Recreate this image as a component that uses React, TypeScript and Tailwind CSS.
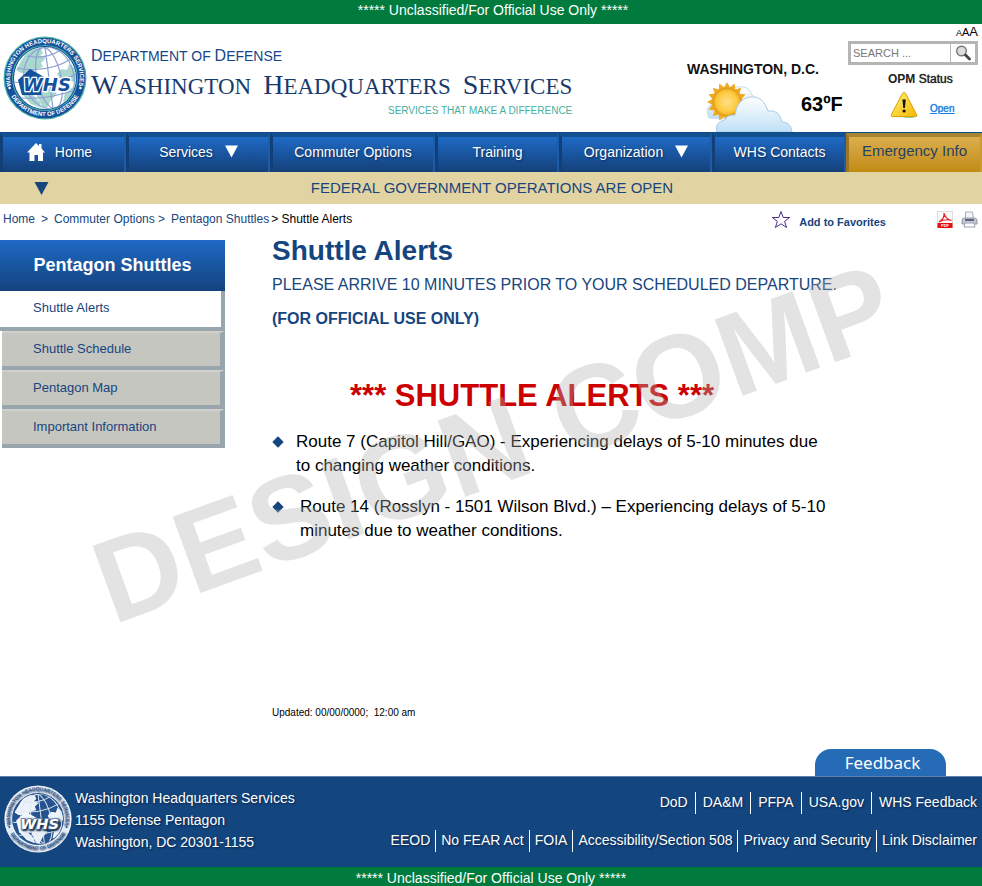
import React from 'react';

function Seal({ id, size, mono }: { id: string; size: string; mono?: boolean }) {
  const ring = mono ? '#e4ebf5' : '#14509c';
  const edge = mono ? '#f4f7fb' : '#4fb3a8';
  const lettering = mono ? '#2f5a93' : '#ffffff';
  const sea = mono ? '#24538d' : '#ffffff';
  const land = mono ? '#eef3fa' : '#a9d8ce';
  const grid = mono ? '#dfe8f4' : '#8d9fd4';
  return (
    <svg viewBox="0 0 84 84" className={size} role="img" aria-label="Washington Headquarters Services seal">
      <defs>
        <path id={id + '-top'} d="M 8.2 50 A 34.8 34.8 0 1 1 75.8 50" />
        <path id={id + '-bottom'} d="M 6 55 A 38.4 38.4 0 0 0 78 55" />
        <clipPath id={id + '-globe'}>
          <circle cx="42" cy="42" r="31" />
        </clipPath>
      </defs>
      <circle cx="42" cy="42" r="41.5" fill={edge} />
      <circle cx="42" cy="42" r="40.2" fill={ring} />
      <circle cx="42" cy="42" r="33" fill={edge} />
      <circle cx="42" cy="42" r="32" fill={mono ? '#24538d' : '#14509c'} />
      <circle cx="42" cy="42" r="31" fill={sea} />
      <g clipPath={`url(#${id}-globe)`}>
        <path d="M13 34 L20 22 L24 16 L31 12 L38 13 L40 17 L37 20 L43 22 L38 27 L40 31 L33 33 L28 37 L18 37 Z M39 50 L50 54 L54 58 L48 64 L44 72 L40 72 L34 60 Z M54 38 L58 33 L64 34 L66 28 L71 32 L74 42 L70 46 L62 43 L56 42 Z M62 56 L72 50 L68 64 L60 66 Z M18 57 L30 59 L37 66 L38 72 L28 68 Z" fill={land} />
        <g fill="none" stroke={grid} strokeWidth="1.2">
          <ellipse cx="46" cy="42" rx="12" ry="31" transform="rotate(-12 46 42)" />
          <ellipse cx="46" cy="42" rx="25" ry="31" transform="rotate(-12 46 42)" />
          <path d="M42 11 L50 73 M14 32 Q44 38 70 22 M11 46 Q46 52 74 38 M18 62 Q44 64 72 54 M24 20 Q42 24 58 14" />
        </g>
      </g>
      <path d="M15 44 L27 33 L41 41 L38 59 L19 59 Z" fill={mono ? '#f4f7fb' : '#14509c'} />
      <text x="20" y="54.5" fontFamily="DejaVu Sans, sans-serif" fontWeight="bold" fontStyle="italic" fontSize="18" stroke={mono ? '#6f8db8' : '#ffffff'} strokeWidth="2.6" paintOrder="stroke" fill={mono ? '#ffffff' : '#14509c'}>WHS</text>
      <g fontFamily="Liberation Sans, sans-serif" fontWeight="bold" fill={lettering}>
        <text fontSize="6">
          <textPath href={`#${id}-top`} startOffset="50%" textAnchor="middle">WASHINGTON HEADQUARTERS SERVICES</textPath>
        </text>
        <text fontSize="6">
          <textPath href={`#${id}-bottom`} startOffset="50%" textAnchor="middle">DEPARTMENT OF DEFENSE</textPath>
        </text>
      </g>
      <circle cx="6.6" cy="52" r="1.3" fill={lettering} />
      <circle cx="77.4" cy="52" r="1.3" fill={lettering} />
    </svg>
  );
}

function SunCloud() {
  const rays = Array.from({ length: 16 }, (_, i) => {
    const a = (i * Math.PI) / 8;
    const p = (r: number, d: number) => `${22 + r * Math.cos(a + d)},${20 + r * Math.sin(a + d)}`;
    return `${p(20, 0)} ${p(15, 0.2)}`;
  }).join(' ');
  return (
    <svg viewBox="0 0 88 50" className="mt-1 h-[50px] w-[88px]" aria-hidden="true">
      <defs>
        <linearGradient id="cloud" x1="0" y1="0" x2="0" y2="1">
          <stop offset="0" stopColor="#ffffff" />
          <stop offset="1" stopColor="#bfe0f6" />
        </linearGradient>
        <radialGradient id="sun">
          <stop offset="0" stopColor="#ffe08a" />
          <stop offset="0.75" stopColor="#fdc93c" />
          <stop offset="1" stopColor="#e9a31c" />
        </radialGradient>
      </defs>
      <path d="M4 36 Q-1 26 7 22 Q20 6 32 5 Q44 3 47 13 Q54 16 50 24 Q40 38 16 37 Z" fill="url(#cloud)" stroke="#c9dcea" strokeWidth="1" />
      <polygon points={rays} fill="#f0ab22" />
      <circle cx="22" cy="20" r="14" fill="url(#sun)" stroke="#dc9a1e" strokeWidth="1" />
      <path d="M12 50 Q9 40 20 38 Q21 33 30 33 Q32 17 45 15 Q58 13 63 29 Q74 27 77 40 Q86 40 87 50 Z" fill="url(#cloud)" stroke="#a9cde6" strokeWidth="1" />
    </svg>
  );
}

function WarningIcon() {
  return (
    <svg viewBox="0 0 28 27" className="h-[27px] w-[28px]" aria-hidden="true">
      <defs>
        <linearGradient id="warn" x1="0" y1="0" x2="1" y2="1">
          <stop offset="0" stopColor="#fff27a" />
          <stop offset="1" stopColor="#f5b800" />
        </linearGradient>
      </defs>
      <ellipse cx="19" cy="25" rx="7" ry="2" fill="#8ed27e" />
      <path d="M14 1.5 Q15 1.5 15.6 2.6 L26.8 24 Q27 25.4 26 25.5 L2 25.5 Q1 25.4 1.2 24 L12.4 2.6 Q13 1.5 14 1.5Z" fill="url(#warn)" stroke="#d9a300" />
      <path d="M12.4 8.5 H15.8 L14.9 17 H13.3 Z" fill="#111" />
      <circle cx="14.1" cy="20" r="1.6" fill="#111" />
    </svg>
  );
}

function Down({ className }: { className: string }) {
  return (
    <svg viewBox="0 0 14 13" className={className} aria-hidden="true">
      <path d="M0 0H14L7 13Z" fill="currentColor" />
    </svg>
  );
}

function HomeIcon() {
  return (
    <svg viewBox="0 0 18 18" className="h-[18px] w-[18px]" aria-hidden="true">
      <path d="M9 0 L12 3 V1 H14.5 V5.5 L18 9.5 H16 V18 H11 V12 H7.5 V18 H2.5 V9.5 H0 Z" fill="#fff" />
    </svg>
  );
}

function NavItem({ label, icon, menu, gold }: { label: string; icon?: React.ReactNode; menu?: boolean; gold?: boolean }) {
  return (
    <a
      href="#"
      className={
        'flex items-center justify-center whitespace-nowrap border-t-4 border-r-2 border-l-[3px] pb-1.5 ' +
        (gold
          ? 'border-t-[#a88436] border-r-[#c99a2d] border-l-[#9c7423] bg-linear-to-b from-[#dcae4b] to-[#c18b10] text-[15px] text-[#1f4267]'
          : 'border-t-[#12508f] border-r-[#1c5ca9] border-l-[#123f78] bg-linear-to-b from-[#1e6ac6] to-[#144079] text-sm text-white [text-shadow:1px_1px_2px_#0b2c58]')
      }
    >
      {icon && <span className="mr-2.5">{icon}</span>}
      <span className={icon ? 'pr-2' : ''}>{label}</span>
      {menu && <Down className="ml-3 h-[13px] w-[13px]" />}
    </a>
  );
}

function FooterRow({ items, pad }: { items: string[]; pad: string }) {
  return (
    <ul className="flex justify-end divide-x divide-white">
      {items.map((t) => (
        <li key={t} className={'h-[22px] whitespace-nowrap leading-[20px] last:pr-0 ' + pad}>
          <a href="#">{t}</a>
        </li>
      ))}
    </ul>
  );
}

const BANNER = '***** Unclassified/For Official Use Only *****';

export default function App() {
  return (
    <div className="flex min-h-screen flex-col bg-white font-['Liberation_Sans',Arial,sans-serif] text-black">
      <div className="h-6 bg-[#007b3d] pl-1 text-center text-sm leading-5 text-white">{BANNER}</div>

      <header className="flex h-[108px] justify-between">
        <div className="flex pt-3 pl-[3px]">
          <Seal id="seal" size="h-[84px] w-[84px]" />
          <div className="flex flex-col pt-2.5 pl-1 text-[#173a6c]">
            <p className="text-base leading-5 text-[#17468a]">
              D<span className="text-sm">EPARTMENT OF </span>D<span className="text-sm">EFENSE</span>
            </p>
            <h1 className="flex gap-3 font-['Liberation_Serif',serif] text-[28px] leading-[37px] whitespace-nowrap">
              <span>W<span className="text-[23px]">ASHINGTON</span></span>
              <span>H<span className="text-[23px]">EADQUARTERS</span></span>
              <span>S<span className="text-[23px]">ERVICES</span></span>
            </h1>
            <p className="text-right text-[10px] leading-3 text-[#45b09c]">SERVICES THAT MAKE A DIFFERENCE</p>
          </div>
        </div>
        <div className="flex gap-[5px] pr-1">
          <div className="w-[156px] pt-9">
            <p className="text-sm leading-[18px] font-bold whitespace-nowrap text-[#111]">WASHINGTON, D.C.</p>
            <div className="flex pl-[18px]">
              <SunCloud />
              <p className="pt-3 pl-2 text-xl leading-7 font-bold">63ºF</p>
            </div>
          </div>
          <div className="w-[130px]">
            <div className="flex h-[17px] items-baseline justify-end leading-4 text-black">
              <button type="button" aria-label="Small text" className="text-[9px]">A</button>
              <button type="button" aria-label="Medium text" className="text-[11px]">A</button>
              <button type="button" aria-label="Large text" className="text-[13px]">A</button>
            </div>
            <form className="flex h-6 border-[3px] border-[#b5b5b5]">
              <input aria-label="Search" placeholder="SEARCH ..." className="w-full min-w-0 px-0.5 text-[11px] placeholder:text-[#777]" />
              <button type="button" aria-label="Search" className="border-l border-[#b5b5b5] px-1">
                <svg viewBox="0 0 16 16" className="h-4 w-4" aria-hidden="true">
                  <circle cx="6.5" cy="6" r="4.8" fill="#dcdcdc" stroke="#777" strokeWidth="1.4" />
                  <path d="M10.5 10 L14.5 14" stroke="#444" strokeWidth="2.8" strokeLinecap="round" />
                </svg>
              </button>
            </form>
            <div className="pt-1.5 pl-10">
              <p className="text-xs leading-4 whitespace-nowrap text-[#222]"><b>OPM</b> <span className="[text-shadow:0_0_1px_#222]">Status</span></p>
              <div className="flex items-center gap-3 pt-1 pl-0.5">
                <WarningIcon />
                <a href="#" className="pt-2 text-[10px] leading-4 text-[#1c7fe0] underline [text-shadow:0_0_1px_#1c7fe0]">Open</a>
              </div>
            </div>
          </div>
        </div>
      </header>

      <nav aria-label="Main" className="grid h-10 grid-cols-[126fr_144fr_165fr_124fr_153fr_134fr_136fr] border-t border-[#0f4c8c]">
        <NavItem label="Home" icon={<HomeIcon />} />
        <NavItem label="Services" menu />
        <NavItem label="Commuter Options" />
        <NavItem label="Training" />
        <NavItem label="Organization" menu />
        <NavItem label="WHS Contacts" />
        <NavItem label="Emergency Info" gold />
      </nav>

      <div className="grid h-8 grid-cols-[50px_1fr_48px] items-center bg-[#e2d3a2] text-[#17457e]">
        <Down className="ml-[34px] h-[13px] w-[15px]" />
        <p className="text-center text-[15px] leading-8">FEDERAL GOVERNMENT OPERATIONS ARE OPEN</p>
      </div>

      <main className="relative grow">
        <div className="flex h-7 justify-between pr-1">
          <nav aria-label="Breadcrumb" className="flex items-center gap-1.5 pt-0.5 pl-[3px] text-xs text-[#17457e]">
            <a href="#">Home</a>
            <span>&gt;</span>
            <a href="#">Commuter Options &gt;</a>
            <a href="#">Pentagon Shuttles</a>
            <span className="-ml-1 text-black">&gt; Shuttle Alerts</span>
          </nav>
          <div className="flex items-center pt-0.5">
            <button type="button" className="mr-[51px] flex items-center gap-2 text-[11px] font-bold text-[#17457e]">
              <svg viewBox="0 0 20 19" className="h-[19px] w-5" aria-hidden="true">
                <path d="M10 1.5 L12.2 7.5 H18.6 L13.6 11.4 L15.6 17.5 L10 13.8 L4.4 17.5 L6.4 11.4 L1.4 7.5 H7.8 Z" fill="#fff" stroke="#4a2a86" strokeWidth="1" />
              </svg>
              <span className="pt-1.5">Add to Favorites</span>
            </button>
            <button type="button" aria-label="Save as PDF" className="mr-2">
              <svg viewBox="0 0 16 17" className="h-[17px] w-4">
                <rect x="0.5" y="0.5" width="15" height="16" fill="#fafafa" stroke="#ddd" />
                <path d="M2 11 Q8 7.5 7 2 Q8 7.5 14.5 9.5 Q8 7.5 2 11Z" fill="none" stroke="#e32424" strokeWidth="1.2" />
                <rect x="0.5" y="12" width="15" height="5" fill="#e80f0f" />
                <text x="8" y="16" textAnchor="middle" fontSize="4" fontWeight="bold" fill="#fff" fontFamily="Liberation Sans, sans-serif">PDF</text>
              </svg>
            </button>
            <button type="button" aria-label="Print">
              <svg viewBox="0 0 17 17" className="h-[17px] w-[17px]">
                <path d="M4.5 8 V1 H11.5 L12.5 8" fill="#f3f6fb" stroke="#a5aebc" />
                <path d="M1 10 Q1 7 3.5 7 H13.5 Q16 7 16 10 V13 H1 Z" fill="#c4c9d6" stroke="#8f96a5" />
                <path d="M4 9 H13" stroke="#454c5b" strokeWidth="1.6" />
                <path d="M4 12 H13 L14 16 H3 Z" fill="#fff" stroke="#9aa2b2" />
              </svg>
            </button>
          </div>
        </div>

        <div className="flex">
          <aside className="w-[225px] shrink-0 pt-2">
            <h2 className="h-[51px] bg-linear-to-b from-[#1e6ac6] to-[#14437e] text-center text-lg leading-[51px] font-bold text-white">Pentagon Shuttles</h2>
            <ul className="text-[13px] text-[#17457e]">
              <li className="h-10 border-r-4 border-b-4 border-[#99a5ac] bg-white pl-[33px] leading-[34px]"><a href="#">Shuttle Alerts</a></li>
              {['Shuttle Schedule', 'Pentagon Map', 'Important Information'].map((t) => (
                <li key={t} className="ml-0.5 h-[39px] border-t-2 border-r-[5px] border-b-4 border-t-[#d0d1cc] border-r-[#99a5ac] border-b-[#99a5ac] bg-[#c6c6c0] pl-[31px] leading-[32px]"><a href="#">{t}</a></li>
              ))}
            </ul>
          </aside>
          <section className="grow pt-px pl-[47px]">
            <h2 className="text-[28px] leading-9 font-bold text-[#14457f]">Shuttle Alerts</h2>
            <p className="pt-1 text-base leading-6 text-[#17457e]">PLEASE ARRIVE 10 MINUTES PRIOR TO YOUR SCHEDULED DEPARTURE.</p>
            <p className="pt-2.5 text-base leading-6 font-bold text-[#14457f]">(FOR OFFICIAL USE ONLY)</p>
            <h3 className="pt-[45px] pl-[78px] text-[31px] leading-10 font-bold text-[#cc0000]">*** SHUTTLE ALERTS ***</h3>
            <ul className="flex flex-col gap-[17px] pt-3.5 text-[17px] leading-6">
              <li className="flex gap-3.5">
                <span className="mt-2 ml-0.5 h-2 w-2 shrink-0 rotate-45 bg-[#14457f]" />
                <span>Route 7 (Capitol Hill/GAO) - Experiencing delays of 5-10 minutes due<br />to changing weather conditions.</span>
              </li>
              <li className="flex gap-[18px]">
                <span className="mt-2 ml-0.5 h-2 w-2 shrink-0 rotate-45 bg-[#14457f]" />
                <span>Route 14 (Rosslyn - 1501 Wilson Blvd.) – Experiencing delays of 5-10<br />minutes due to weather conditions.</span>
              </li>
            </ul>
            <p className="pt-[162px] text-[10px] leading-4 whitespace-pre">Updated: 00/00/0000;  12:00 am</p>
          </section>
        </div>

        <p aria-hidden="true" className="pointer-events-none absolute top-[321px] left-[113px] origin-[0_100px] -rotate-20 text-[118px] leading-none font-bold whitespace-nowrap text-[#b0b0b0]/35">DESIGN COMP</p>
      </main>

      <div className="flex justify-end pr-9">
        <button type="button" className="h-[27px] w-[131px] rounded-t-[16px] bg-[#256bb5] pl-1 font-['Noto_Sans','Open_Sans',sans-serif] text-[17px] leading-[27px] text-white">Feedback</button>
      </div>
      <footer className="flex h-[91px] justify-between border-t border-[#5c80ab] bg-[#13457f] pr-[5px] text-sm text-white [text-shadow:1px_1px_2px_#0a2346]">
        <div className="flex pt-2 pl-1">
          <Seal id="footer-seal" size="h-[68px] w-[68px]" mono />
          <address className="pt-0.5 pl-[3px] leading-[22px] whitespace-nowrap not-italic">
            Washington Headquarters Services<br />1155 Defense Pentagon<br />Washington, DC 20301-1155
          </address>
        </div>
        <div className="flex flex-col gap-4 pt-[15px]">
          <FooterRow pad="px-[7px]" items={['DoD', 'DA&M', 'PFPA', 'USA.gov', 'WHS Feedback']} />
          <FooterRow pad="px-[5px]" items={['EEOD', 'No FEAR Act', 'FOIA', 'Accessibility/Section 508', 'Privacy and Security', 'Link Disclaimer']} />
        </div>
      </footer>
      <div className="h-[19px] bg-[#007b3d] pt-1 text-center text-sm leading-[15px] text-white">{BANNER}</div>
    </div>
  );
}
